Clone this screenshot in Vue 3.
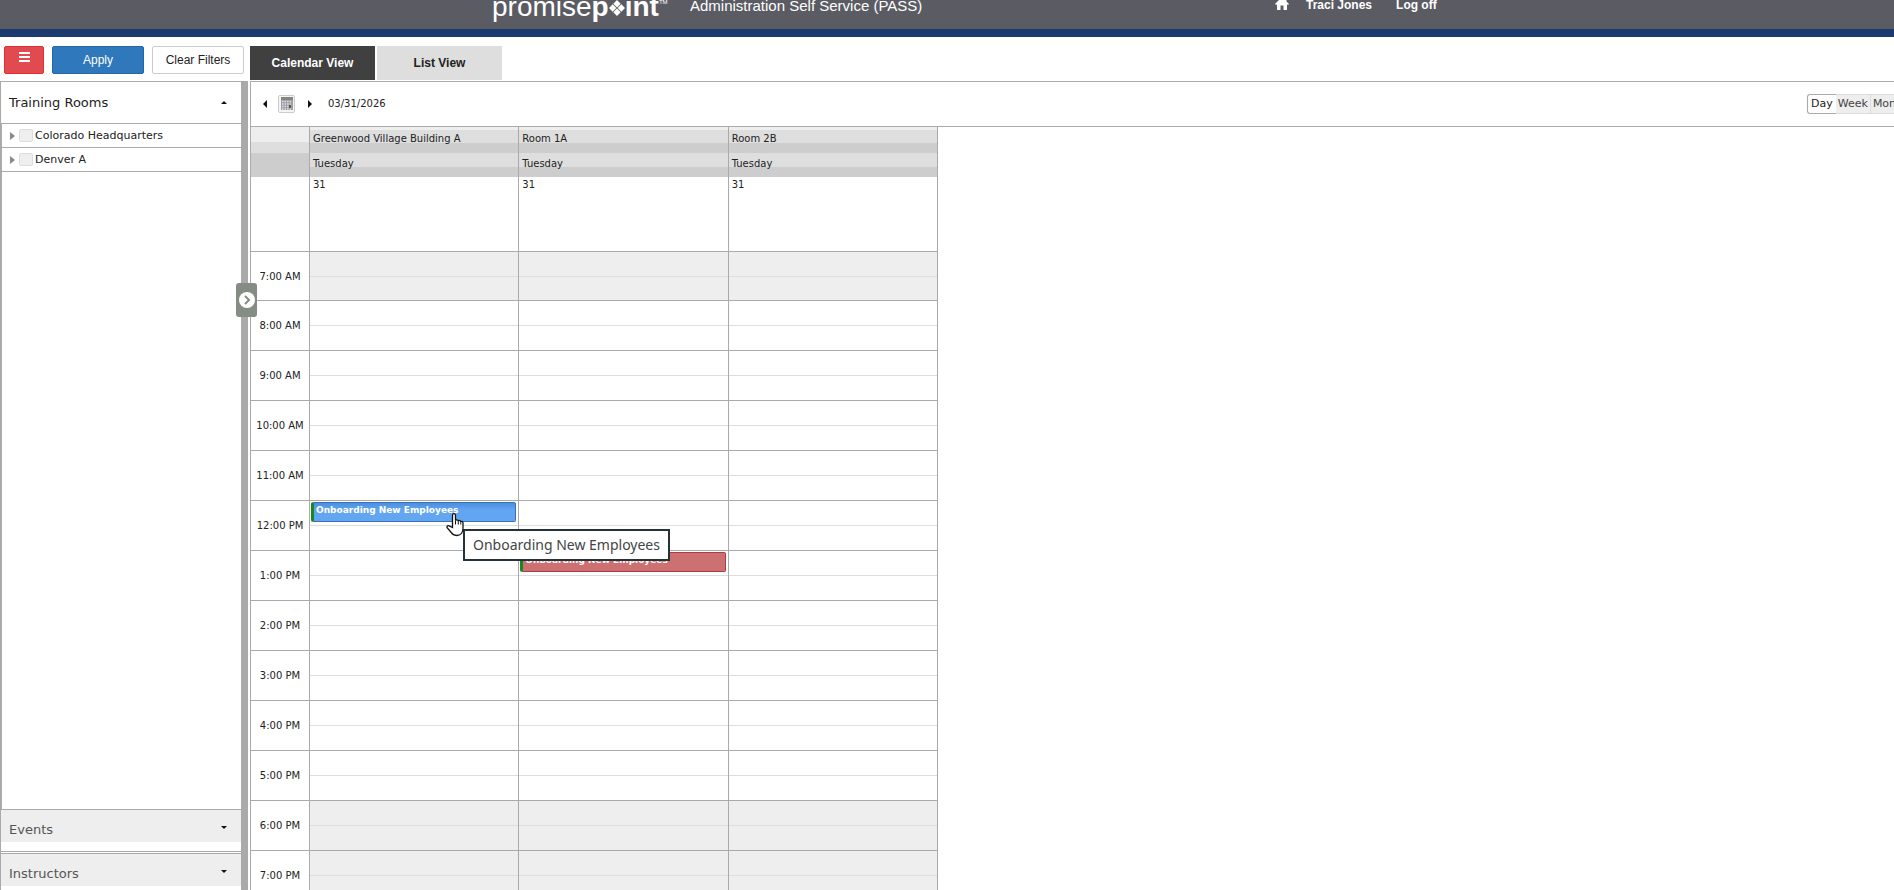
<script setup>
import { ref } from 'vue'

const rooms = ['Colorado Headquarters', 'Denver A']
const columns = ['Greenwood Village Building A', 'Room 1A', 'Room 2B']
const hours = [
  '7:00 AM', '8:00 AM', '9:00 AM', '10:00 AM', '11:00 AM', '12:00 PM', '1:00 PM',
  '2:00 PM', '3:00 PM', '4:00 PM', '5:00 PM', '6:00 PM', '7:00 PM',
]
const offHours = ['7:00 AM', '6:00 PM', '7:00 PM']
const events = [
  { hour: '12:00 PM', col: 0, title: 'Onboarding New Employees', tone: 'blue' },
  { hour: '1:00 PM', col: 1, title: 'Onboarding New Employees', tone: 'red' },
]
const view = ref('Day')
const checked = ref([])
const eventAt = (hour, col) => events.filter((e) => e.hour === hour && e.col === col)
</script>

<template>
  <div class="page">
    <header class="top">
      <div class="logo">
        <span>promise</span><b>p</b>
        <svg class="gem" viewBox="0 0 16 16" aria-hidden="true">
          <path d="M8 0l3.7 3.7L8 7.400 4.300 3.700zM3.700 4.300l3.700 3.700-3.700 3.700L0 8zM12.300 4.300L16 8l-3.700 3.700L8.600 8zM8 8.600l3.700 3.700L8 16l-3.700-3.700z" fill="#fff" />
        </svg>
        <b>int</b><sup>TM</sup>
      </div>
      <span class="product">Administration Self Service (PASS)</span>
      <nav class="links">
        <a href="#" aria-label="Home">
          <svg class="home" viewBox="0 0 14 14"><path d="M7 0L0 7l1 1 1-.8V13h3.500V8.500h3V13H12V7.200l1 .8 1-1-2.500-2.500V1H9.700v1.700z" fill="#fff" /></svg>
        </a>
        <a href="#" class="user">Traci Jones</a>
        <a href="#">Log off</a>
      </nav>
    </header>

    <div class="toolbar">
      <div class="actions">
        <button class="btn menu" aria-label="Menu"><i></i><i></i><i></i></button>
        <button class="btn apply">Apply</button>
        <button class="btn clear">Clear Filters</button>
      </div>
      <button class="tab active">Calendar View</button>
      <button class="tab">List View</button>
    </div>

    <main class="body">
      <aside class="side">
        <button class="section open">Training Rooms<i class="up"></i></button>
        <ul class="tree">
          <li v-for="r in rooms" :key="r">
            <i class="twist"></i>
            <label><input v-model="checked" type="checkbox" :value="r" />{{ r }}</label>
          </li>
        </ul>
        <div class="folded"><button class="section">Events<i class="down"></i></button></div>
        <div class="folded last"><button class="section">Instructors<i class="down"></i></button></div>
      </aside>

      <div class="splitter">
        <button class="handle" aria-label="Toggle panel">
          <svg viewBox="0 0 16 16"><circle cx="8" cy="8" r="8" fill="#fff" /><path d="M6 4l4 4-4 4" fill="none" stroke="#848c84" stroke-width="2" /></svg>
        </button>
      </div>

      <section class="scheduler">
        <div class="datebar">
          <button class="arrow" aria-label="Previous day"><i class="left"></i></button>
          <button class="pick" aria-label="Pick a date">
            <svg viewBox="0 0 12 13">
              <path d="M0 0h12v13H0z" fill="#a39da5" /><path d="M0 0h12v3H0z" fill="#7f877f" />
              <path d="M1 4.500h10M1 7h10M1 9.500h10M1 12h10" stroke="#dcdade" stroke-width="1.500" stroke-dasharray="1.500 1" /><path d="M8 8h2v3H8z" fill="#555" />
            </svg>
          </button>
          <button class="arrow" aria-label="Next day"><i class="right"></i></button>
          <span class="date">03/31/2026</span>
          <div class="views">
            <button v-for="v in ['Day', 'Week', 'Month']" :key="v" :class="{ on: view === v }" @click="view = v">{{ v }}</button>
          </div>
        </div>

        <table class="grid">
          <thead>
            <tr class="names"><th></th><th v-for="c in columns" :key="c">{{ c }}</th></tr>
            <tr class="days"><th></th><th v-for="c in columns" :key="c">Tuesday</th></tr>
          </thead>
          <tbody>
            <tr class="allday"><th></th><td v-for="c in columns" :key="c">31</td></tr>
            <tr v-for="h in hours" :key="h" class="hour" :class="{ off: offHours.includes(h) }">
              <th>{{ h }}</th>
              <td v-for="(c, i) in columns" :key="c">
                <div v-for="e in eventAt(h, i)" :key="e.title" class="event" :class="e.tone">
                  {{ e.title }}
                  <template v-if="e.tone === 'blue'">
                    <svg class="pointer" viewBox="0 0 18 24"><path d="M6.500 15V3c0-2.500 3-2.500 3 0v5c.5-1 2.500-1 2.800.4.700-.8 2.300-.5 2.500.8 1-.6 2.200 0 2.200 1.300V16c0 3.500-2 7-6.500 7-4 0-5-2.500-6.500-4.500L1.300 15.500c-1-2 .9-3 2.500-1.800z" fill="#fff" stroke="#111" stroke-width="1.300" /><path d="M9.500 8v4M12.300 9v3M14.800 10v2" stroke="#111" /></svg>
                    <div class="tip" role="tooltip">{{ e.title }}</div>
                  </template>
                </div>
              </td>
            </tr>
          </tbody>
        </table>
      </section>
    </main>
  </div>
</template>

<style>
body { margin: 0; overflow: hidden; }
</style>

<style scoped>
* { box-sizing: border-box; }
button { font: inherit; color: inherit; padding: 0; margin: 0; border: 0; background: none; cursor: pointer; }
.page { height: 100vh; display: flex; flex-direction: column; overflow: hidden; background: #fff; color: #222; font-family: Verdana, "DejaVu Sans", sans-serif; font-size: 10px; }

.top { flex: none; height: 37px; padding-left: 492px; display: flex; align-items: flex-end; overflow: hidden; background: #5b5b63; border-bottom: 8px solid #1a3a70; color: #fff; font-family: Arial, "Liberation Sans", sans-serif; }
.logo { width: 198px; height: 32px; flex: none; display: flex; align-items: baseline; font-size: 28px; line-height: 32px; margin-bottom: 6px; }
.gem { width: 16px; height: 16px; }
.logo sup { font-size: 6px; line-height: 6px; align-self: flex-start; margin-top: 8px; }
.product { font-size: 15px; line-height: 20px; width: 585px; margin-bottom: 13px; white-space: nowrap; }
.links { display: flex; font-size: 12px; line-height: 16px; font-weight: bold; margin-bottom: 16px; }
.links a { color: #fff; text-decoration: none; }
.links .user { margin: 0 24px 0 17px; }
.home { display: block; width: 14px; height: 14px; }

.toolbar { flex: none; height: 44px; padding-top: 9px; display: flex; font-family: Arial, "Liberation Sans", sans-serif; font-size: 12px; }
.actions { width: 250px; padding-left: 4px; display: flex; gap: 8px; flex: none; }
.btn { height: 28px; border: 1px solid #ccc; border-radius: 2px; color: #222; }
.menu { width: 40px; background: #e04a50; border-color: #e0302c; display: flex; flex-direction: column; align-items: center; gap: 2px; padding-top: 5px; }
.menu i { width: 11px; height: 2px; background: #fff; }
.apply { width: 92px; background: #2e78bb; border-color: #2467a8; color: #fff; }
.clear { width: 92px; }
.tab { width: 125px; height: 34px; margin-right: 2px; background: #dedede; font-weight: bold; }
.tab.active { background: #404040; color: #fff; }

.body { flex: 1; min-height: 0; display: flex; }
.side { width: 241px; flex: none; display: flex; flex-direction: column; border-left: 1px solid #aaa; border-top: 1px solid #aaa; overflow: hidden; }
.section { flex: none; width: 100%; height: 32px; padding: 7px 14px 0 8px; display: flex; align-items: center; justify-content: space-between; background: #eee; color: #555; font-size: 13px; text-align: left; }
.section.open { height: 41px; padding-top: 0; background: #fff; color: #222; }
.up, .down { border: 3px solid transparent; border-top-width: 0; border-bottom: 3px solid #111; }
.down { border-top: 3px solid #111; border-bottom-width: 0; margin-bottom: 4px; }
.tree { flex: 1; list-style: none; margin: 0; padding: 0; border-left: 1px solid #aaa; border-top: 1px solid #aaa; font-size: 11px; }
.tree li { height: 24px; padding-left: 8px; display: flex; align-items: center; border-bottom: 1px solid #aaa; }
.tree label { display: flex; align-items: center; }
.twist { width: 5px; border: 4px solid transparent; border-left: 5px solid #888; border-right: 0; margin-right: 4px; }
.tree input { appearance: none; width: 14px; height: 13px; margin: 0 2px 0 0; background: #eee; border: 1px solid #ddd; border-radius: 2px; }
.folded { flex: none; height: 43px; margin-bottom: 1px; border-top: 1px solid #aaa; border-bottom: 1px solid #aaa; }
.folded.last { height: 37px; margin: 0; border-bottom: 0; }

.splitter { flex: none; width: 7px; background: #aaa; position: relative; margin-right: 2px; }
.handle { position: absolute; z-index: 2; left: -5px; top: 202px; width: 21px; height: 34px; background: #848c84; border-radius: 3px; display: flex; align-items: center; justify-content: center; }
.handle svg { width: 16px; height: 16px; }

.scheduler { flex: 1; min-width: 0; border-left: 1px solid #aaa; border-top: 1px solid #aaa; overflow: hidden; }
.datebar { height: 45px; border-bottom: 1px solid #aaa; display: flex; align-items: center; padding: 0 0 1px 12px; }
.arrow { width: 5px; height: 16px; display: flex; align-items: center; }
.left, .right { border: 4px solid transparent; border-left: 0; border-right: 4px solid #111; }
.right { border-left: 4px solid #111; border-right: 0; }
.pick { width: 17px; height: 18px; margin: 0 13px 0 10px; border: 1px solid #ccc; border-radius: 2px; background: #f4f4f4; display: flex; align-items: center; justify-content: center; }
.pick svg { width: 12px; height: 13px; }
.date { margin-left: 15px; }
.views { margin-left: auto; width: 87px; flex: none; display: flex; font-size: 11px; }
.views button { flex: none; height: 20px; padding: 0 2px; background: #eee; border: 1px solid #ddd; border-left-width: 0; color: #444; }
.views .on { padding: 0 3px; background: #fff; color: #222; border: 1px solid #aaa; border-right: 0; border-radius: 3px 0 0 3px; }

.grid { width: 687px; table-layout: fixed; border-collapse: separate; border-spacing: 0; }
.grid th, .grid td { padding: 0 0 0 3px; border-right: 1px solid #aaa; text-align: left; font-weight: normal; }
.grid th:first-child { width: 59px; padding: 0; text-align: center; }
.names th { height: 26px; background: linear-gradient(#eee 0 3px, #dedede 3px 16px, #cdcdcd 16px); }
.names th:first-child { background: linear-gradient(#eee 0 15px, #dedede 15px); }
.grid .names th, .grid .days th { padding-bottom: 3px; }
.days th { height: 24px; background: linear-gradient(#dedede 0 14px, #cdcdcd 14px); }
.days th:first-child { background: #cdcdcd; }
.allday th, .allday td { height: 75px; vertical-align: top; line-height: 16px; border-bottom: 1px solid #aaa; }
.hour th, .hour td { height: 50px; border-bottom: 1px solid #aaa; }
.hour:nth-child(2) th, .hour:nth-child(2) td { height: 49px; }
.hour td { padding: 0 2px 0 1px; vertical-align: top; background: linear-gradient(#ddd, #ddd) 0 24px / 100% 1px no-repeat; }
.off td { background-color: #eee; }
.event { position: relative; height: 20px; margin-top: 1px; padding-left: 2px; font-size: 9px; line-height: 14px; font-weight: bold; color: #fff; border: 1px solid #3b70b3; border-left: 3px solid #138a1c; border-radius: 2px; background: linear-gradient(#4a90e2, #62a5f0 7px); white-space: nowrap; }
.red { background: #cd7072; border-color: #b03a40; border-left-color: #138a1c; }
.pointer { position: absolute; z-index: 4; left: 132px; top: 9px; width: 18px; height: 25px; }
.tip { position: absolute; z-index: 3; left: 149px; top: 26px; height: 32px; padding: 0 8px; border: 2px solid #263238; background: #fff; color: #444; font: 14px/28px "Segoe UI", "Noto Sans", sans-serif; }
</style>
